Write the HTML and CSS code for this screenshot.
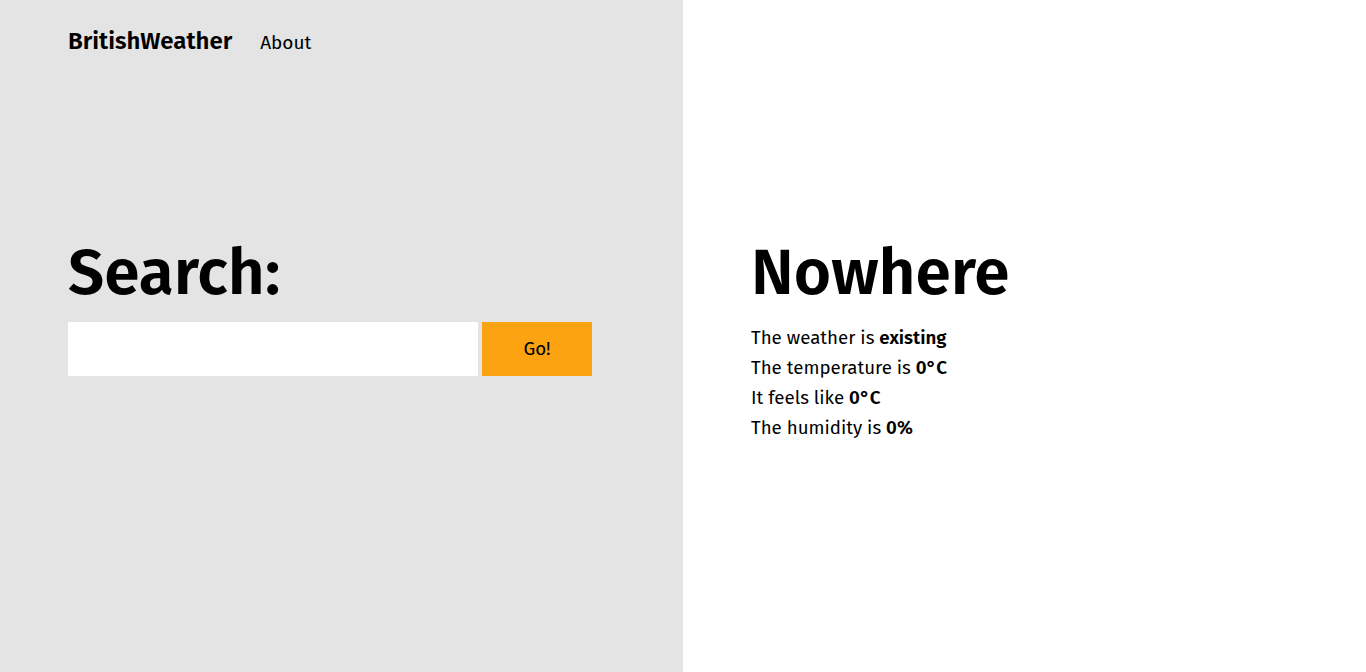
FILE: index.html
```html
<!DOCTYPE html>
<html lang="en">
<head>
<meta charset="utf-8">
<title>BritishWeather</title>
<link rel="stylesheet" href="styles.css">
</head>
<body>
<div class="page">
  <div class="left">
    <nav class="nav">
      <span class="brand">BritishWeather</span>
      <a class="nav-link" href="#">About</a>
    </nav>
    <section class="search">
      <h1 class="title">Search:</h1>
      <form class="search-form">
        <input class="search-input" type="text">
        <button class="search-btn" type="button">Go!</button>
      </form>
    </section>
  </div>
  <div class="right">
    <h1 class="title">Nowhere</h1>
    <p class="line">The weather is <b>existing</b></p>
    <p class="line">The temperature is <b>0°C</b></p>
    <p class="line">It feels like <b>0°C</b></p>
    <p class="line">The humidity is <b>0%</b></p>
  </div>
</div>
</body>
</html>
```
FILE: styles.css
```css
html, body {
  margin: 0;
  padding: 0;
}
body {
  font-family: "Fira Sans", "Open Sans", "Noto Sans", sans-serif;
  color: #000;
}
.page {
  display: grid;
  grid-template-columns: 683px 1fr;
  height: 100vh;
}
.left {
  background: #e4e4e4;
  padding: 0 68px;
}
.right {
  background: #fff;
  padding: 233px 68px 0;
}
.nav {
  display: flex;
  align-items: baseline;
  gap: 28px;
  height: 84px;
  padding-top: 27px;
  box-sizing: border-box;
}
.brand {
  font-weight: 600;
  font-size: 24px;
}
.nav-link {
  color: #000;
  text-decoration: none;
  font-size: 19px;
}
.search {
  padding-top: 149px;
}
.title {
  margin: 0;
  font-size: 64px;
  font-weight: 600;
  line-height: 80px;
}
.search-form {
  display: flex;
  gap: 4px;
  margin-top: 9px;
}
.search-input {
  width: 410px;
  height: 54px;
  border: none;
  background: #fff;
  box-sizing: border-box;
  padding: 0 12px;
  font: inherit;
}
.search-btn {
  width: 110px;
  height: 54px;
  border: none;
  background: #fca311;
  font: inherit;
  font-size: 18.7px;
  color: #000;
}
.line {
  margin: 0;
  font-size: 18.7px;
  line-height: 30px;
}
.line b {
  font-weight: 600;
}
.right .title {
  margin-bottom: 10px;
}
```
